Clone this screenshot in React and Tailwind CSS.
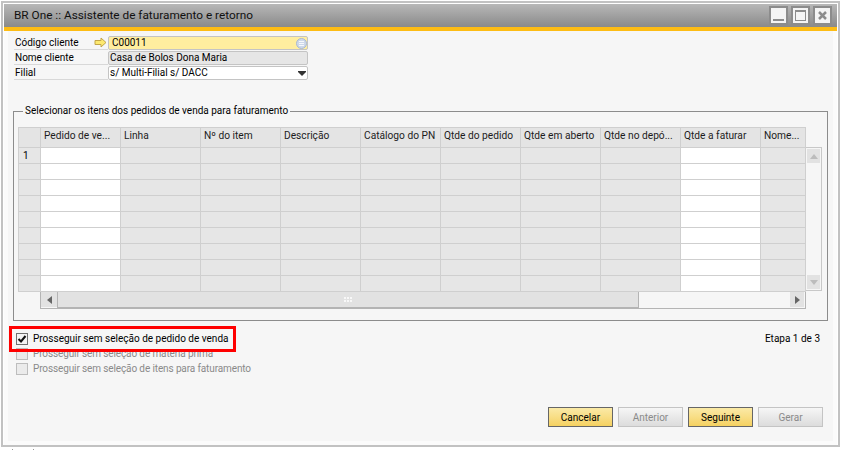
import { Fragment } from 'react';

const COLUMNS = [
  'Pedido de ve...',
  'Linha',
  'Nº do item',
  'Descrição',
  'Catálogo do PN',
  'Qtde do pedido',
  'Qtde em aberto',
  'Qtde no depó...',
  'Qtde a faturar',
  'Nome...',
];
const WHITE_COLS = [0, 8];
const ROWS = [0, 1, 2, 3, 4, 5, 6, 7, 8];

function WindowButton({ children }) {
  return (
    <div className="w-[19px] h-[19px] bg-[#f4f4f4] border-2 border-[#8c8c8c] flex items-center justify-center">
      {children}
    </div>
  );
}

function FormRow({ label, arrow, children }) {
  return (
    <div className="flex h-[15px]">
      <div className="w-[94px] h-[14px] border-b border-[#d8d8d8] pl-[1px] leading-[13px] text-black relative">
        {label}
        {arrow && (
          <svg className="absolute left-[80px] top-[1px]" width="13" height="11" viewBox="0 0 13 11">
            <path d="M1 3.5H7V1L12 5.5L7 10V7.5H1Z" fill="#fde96f" stroke="#c2a548" />
          </svg>
        )}
      </div>
      {children}
    </div>
  );
}

function FormField({ className, children }) {
  return (
    <div className={`w-[200px] h-[14px] border border-[#c4c4c4] rounded-[2px] pl-[1px] leading-[12px] flex items-center justify-between ${className}`}>
      {children}
    </div>
  );
}

function CheckRow({ checked, children }) {
  return (
    <div className="flex items-center h-[15px]">
      <div className={`w-[12px] h-[12px] border flex items-center justify-center ${checked ? 'border-[#707070] bg-[#f4f4f4]' : 'border-[#bdbdbd] bg-[#ebebeb]'}`}>
        {checked && (
          <svg width="10" height="10" viewBox="0 0 10 10">
            <path d="M1.5 5L4 7.5L8.5 2" fill="none" stroke="#111" strokeWidth="2" />
          </svg>
        )}
      </div>
      <span className={`ml-[5px] ${checked ? 'text-black' : 'text-[#8a8a8a] tracking-[-0.12px]'}`}>{children}</span>
    </div>
  );
}

function WizardButton({ primary, children }) {
  return (
    <div
      className={`w-[65px] h-[20px] border flex items-center justify-center ${
        primary
          ? 'border-[#666666] bg-gradient-to-b from-[#fbeaa6] to-[#f5d160] text-black'
          : 'border-[#c4c4c4] bg-gradient-to-b from-[#f6f6f6] to-[#dcdcdc] text-[#8a8a8a]'
      }`}
    >
      {children}
    </div>
  );
}

function Grid() {
  return (
    <div className="grid grid-cols-[22px_repeat(9,80px)_45px] border-t border-l border-[#cfcfcf] w-max">
      <div className="h-[20px] bg-[#e4e4e4] border-r border-b border-[#cfcfcf]" />
      {COLUMNS.map((c) => (
        <div key={c} className="h-[20px] bg-[#e4e4e4] border-r border-b border-[#cfcfcf] pl-[3px] text-[10.2px] leading-[16px] text-[#1c1c1c] whitespace-nowrap overflow-hidden">
          {c}
        </div>
      ))}
      {ROWS.map((r) => (
        <Fragment key={r}>
          <div className="h-[16px] bg-[#e6e6e6] border-r border-b border-[#cfcfcf] pl-[4px] leading-[15px] text-black">
            {r === 0 ? '1' : ''}
          </div>
          {COLUMNS.map((c, i) => (
            <div key={c} className={`h-[16px] border-r border-b border-[#cfcfcf] ${WHITE_COLS.includes(i) ? 'bg-white' : 'bg-[#e6e6e6]'}`} />
          ))}
        </Fragment>
      ))}
    </div>
  );
}

function VerticalScroll() {
  return (
    <div className="mt-[20px] w-[16px] h-[144px] border-t border-r border-b border-[#c8c8c8] pl-[1px] pr-[1px] pt-[1px] pb-[1px] flex flex-col justify-between">
      <div className="h-[14px] bg-[#e2e2e2] flex items-center justify-center">
        <svg width="8" height="5" viewBox="0 0 8 5"><path d="M4 0L8 5H0Z" fill="#bcbcbc" /></svg>
      </div>
      <div className="h-[14px] bg-[#e2e2e2] flex items-center justify-center">
        <svg width="8" height="5" viewBox="0 0 8 5"><path d="M0 0H8L4 5Z" fill="#bcbcbc" /></svg>
      </div>
    </div>
  );
}

function HorizontalScroll() {
  return (
    <div className="ml-[22px] w-[766px] h-[17px] border-l border-r border-b border-[#b4b4b4] flex items-stretch">
      <div className="w-[16px] h-[15px] bg-[#e2e2e2] flex items-center justify-center">
        <svg width="5" height="8" viewBox="0 0 5 8"><path d="M5 0V8L0 4Z" fill="#666" /></svg>
      </div>
      <div className="w-[582px] h-[16px] bg-[#e2e2e2] border border-t-0 border-[#b4b4b4] flex items-center justify-center">
        <div className="grid grid-cols-3 gap-x-[1px] gap-y-[1px]">
          {[0, 1, 2, 3, 4, 5].map((d) => (
            <div key={d} className="w-[2px] h-[2px] bg-[#f8f8f8]" />
          ))}
        </div>
      </div>
      <div className="flex-1" />
      <div className="w-[14px] h-[15px] mr-[1px] bg-[#e2e2e2] flex items-center justify-center">
        <svg width="5" height="8" viewBox="0 0 5 8"><path d="M0 0V8L5 4Z" fill="#666" /></svg>
      </div>
    </div>
  );
}

export default function App() {
  return (
    <div className="w-[841px] h-[450px] bg-white p-[1px] text-[10px] font-['Roboto',sans-serif] relative overflow-hidden">
      <div className="w-[839px] h-[446px] border-2 border-[#c2c2c2] bg-white pt-[1px] px-[1px]">
        <div className="h-[23px] bg-gradient-to-b from-[#b8b8b8] to-[#8a8a8a] flex items-center justify-between pl-[10px] pr-[5px]">
          <span className="text-[11.8px] text-[#111]">BR One :: Assistente de faturamento e retorno</span>
          <div className="flex gap-[3px]">
            <WindowButton>
              <div className="w-[11px] h-[2px] bg-[#8c8c8c] mt-[8px]" />
            </WindowButton>
            <WindowButton>
              <div className="w-[11px] h-[11px] border border-t-2 border-[#8c8c8c]" />
            </WindowButton>
            <WindowButton>
              <svg width="11" height="11" viewBox="0 0 11 11">
                <path d="M2 2L9 9M9 2L2 9" stroke="#8c8c8c" strokeWidth="2.5" />
              </svg>
            </WindowButton>
          </div>
        </div>
        <div className="h-[4px] bg-[#fdbc14]" />
        <div className="h-[414px] bg-[#f6f6f6] border-x-4 border-b-4 border-[#fbfbfb] pl-[6px] pt-[5px] pr-[10px]">
          <FormRow label="Código cliente" arrow>
            <FormField className="bg-[#ffee9f] text-black">
              <span className="pl-[2px]">C00011</span>
              <svg width="11" height="11" viewBox="0 0 11 11">
                <circle cx="5.5" cy="5.5" r="5" fill="#cdd8ea" stroke="#aab8d0" />
                <path d="M3 3.5H8M3 5.5H8M3 7.5H8" stroke="#f6f8fc" />
              </svg>
            </FormField>
          </FormRow>
          <FormRow label="Nome cliente">
            <FormField className="bg-[#e6e6e6] text-black">Casa de Bolos Dona Maria</FormField>
          </FormRow>
          <FormRow label="Filial">
            <FormField className="bg-white text-black">
              <span>s/ Multi-Filial s/ DACC</span>
              <svg className="mr-[1px]" width="8" height="5" viewBox="0 0 8 5">
                <path d="M0 0H8V1L4 5L0 1Z" fill="#333" />
              </svg>
            </FormField>
          </FormRow>

          <fieldset className="mt-[24px] -ml-[1px] w-[815px] h-[216px] border border-[#8c8c8c] pl-[4px] pt-0">
            <legend className="ml-[5px] px-[2px] leading-[12px] text-black">Selecionar os itens dos pedidos de venda para faturamento</legend>
            <div className="mt-[10px] flex items-start">
              <Grid />
              <VerticalScroll />
            </div>
            <HorizontalScroll />
          </fieldset>

          <div className="mt-[10px] pl-[2px]">
            <div className="flex justify-between items-center w-[804px]">
              <CheckRow checked>Prosseguir sem seleção de pedido de venda</CheckRow>
              <span className="text-black">Etapa 1 de 3</span>
            </div>
            <CheckRow>Prosseguir sem seleção de matéria prima</CheckRow>
            <CheckRow>Prosseguir sem seleção de itens para faturamento</CheckRow>
          </div>

          <div className="mt-[31px] flex justify-end gap-[5px]">
            <WizardButton primary>Cancelar</WizardButton>
            <WizardButton>Anterior</WizardButton>
            <WizardButton primary>Seguinte</WizardButton>
            <WizardButton>Gerar</WizardButton>
          </div>
        </div>
      </div>
      <div className="absolute left-[9px] top-[326px] w-[227px] h-[26px] border-[3px] border-[#ff0000]" />
      <div className="absolute left-[12px] top-[449px] w-[22px] h-[1px] border-x border-[#999999]" />
    </div>
  );
}
